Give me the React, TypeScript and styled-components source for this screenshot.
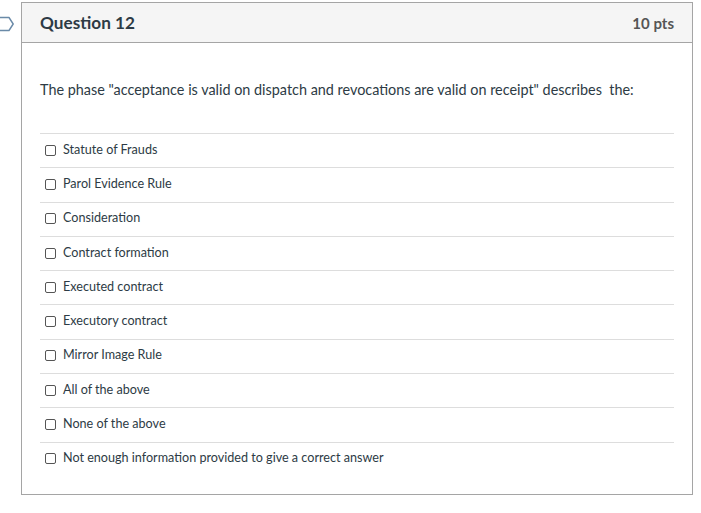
import styled, { createGlobalStyle } from 'styled-components';

const GlobalStyle = createGlobalStyle`
	html, body {
		margin: 0;
		padding: 0;
		background: #ffffff;
	}
	body {
		font-family: 'Lato', 'Liberation Sans', sans-serif;
		color: #2d3b45;
	}
`;

const answers = [
	'Statute of Frauds',
	'Parol Evidence Rule',
	'Consideration',
	'Contract formation',
	'Executed contract',
	'Executory contract',
	'Mirror Image Rule',
	'All of the above',
	'None of the above',
	'Not enough information provided to give a correct answer',
];

export default function App() {
	return (
		<>
			<GlobalStyle />
			<Page>
				<FlagSlot>
					<svg width='21' height='16' viewBox='0 0 21 16'>
						<path
							d='M-3 1.5 H9 L13.2 8 L9 14.5 H-3'
							fill='none'
							stroke='#6a8aa8'
							strokeWidth='1.4'
							strokeLinejoin='round'
						/>
					</svg>
				</FlagSlot>
				<Card>
					<Header>
						<Title>Question 12</Title>
						<Points>10 pts</Points>
					</Header>
					<Body>
						<QuestionText>
							The phase "acceptance is valid on dispatch and revocations are
							valid on receipt" describes&nbsp; the:
						</QuestionText>
						<AnswerList>
							{answers.map((a) => (
								<Answer key={a}>
									<Box />
									<AnswerLabel>{a}</AnswerLabel>
								</Answer>
							))}
						</AnswerList>
					</Body>
				</Card>
			</Page>
		</>
	);
}

const Page = styled.div`
	display: flex;
	align-items: flex-start;
	padding-top: 2px;
`;

const FlagSlot = styled.div`
	width: 21px;
	padding-top: 14px;
	display: flex;
	svg {
		display: block;
	}
`;

const Card = styled.div`
	width: 670px;
	border: 1px solid #a5a5a5;
	box-sizing: content-box;
`;

const Header = styled.div`
	height: 39px;
	background: #f5f5f5;
	border-bottom: 1px solid #a5a5a5;
	display: flex;
	align-items: center;
	justify-content: space-between;
	padding: 0 18px 0 18px;
`;

const Title = styled.h2`
	margin: 0;
	font-size: 17.2px;
	font-weight: 700;
	color: #2d3b45;
`;

const Points = styled.span`
	font-size: 15px;
	font-weight: 700;
	color: #555555;
`;

const Body = styled.div`
	padding: 37px 18px 18px 18px;
`;

const QuestionText = styled.p`
	margin: 0 0 33px 0;
	font-size: 14.4px;
	line-height: 20px;
	color: #2d3b45;
`;

const AnswerList = styled.div`
	display: flex;
	flex-direction: column;
`;

const Answer = styled.div`
	display: flex;
	align-items: center;
	height: 34.3px;
	box-sizing: border-box;
	padding: 0 0 3px 5px;
	border-top: 1px solid #dddddd;
`;

const Box = styled.span`
	width: 9px;
	height: 9px;
	border: 1px solid #555555;
	border-radius: 2px;
	margin: 2px 7px 0 0;
	flex-shrink: 0;
`;

const AnswerLabel = styled.span`
	font-size: 12.6px;
	color: #2d3b45;
`;
